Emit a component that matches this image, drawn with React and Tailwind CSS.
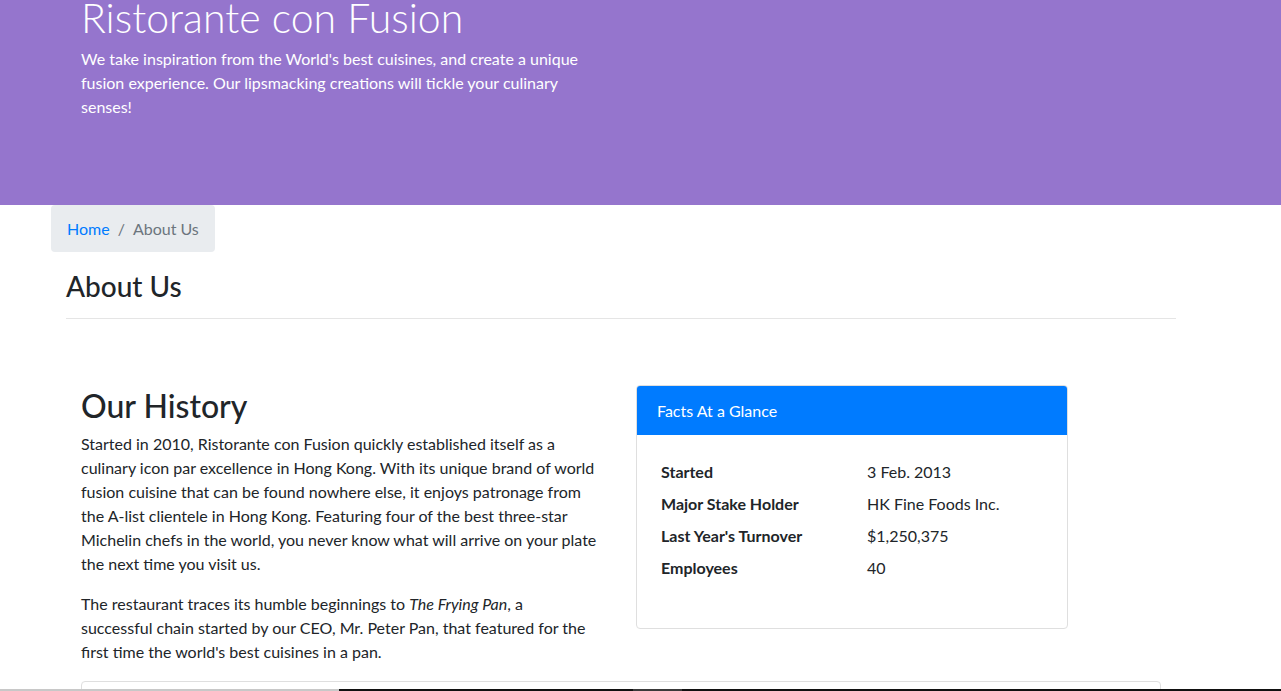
import React from 'react';

// About page: jumbotron, breadcrumb, history + facts card

const facts = [
  { label: 'Started', value: '3 Feb. 2013' },
  { label: 'Major Stake Holder', value: 'HK Fine Foods Inc.' },
  { label: "Last Year's Turnover", value: '$1,250,375' },
  { label: 'Employees', value: '40' },
];

export default function App() {
  return (
    <div className="min-h-screen bg-white text-[#212529] font-['Segoe_UI','Lato','Noto_Sans',sans-serif] text-[16px] leading-6">
      <header className="h-[205px] overflow-hidden bg-[#9575cd]">
        <div className="ml-[51px] w-[1140px] px-[30px]">
          <div className="w-[525px]">
            <h1 className="mt-[-7px] text-[41px] leading-[1.2] font-light text-white">Ristorante con Fusion</h1>
            <p className="mt-[5px] text-white">
              We take inspiration from the World's best cuisines, and create a unique fusion experience. Our lipsmacking creations will tickle your culinary senses!
            </p>
          </div>
        </div>
      </header>

      <div className="ml-[51px] w-[1140px]">
        <nav className="inline-flex h-[47px] items-center rounded bg-[#e9ecef] px-4">
          <a href="#" className="text-[#007bff]">Home</a>
          <span className="px-2 text-[#6c757d]">/</span>
          <span className="text-[#6c757d]">About Us</span>
        </nav>

        <div className="mt-[18px] px-[15px]">
          <h3 className="text-[28px] leading-[1.2] font-medium">About Us</h3>
          <hr className="mt-[14px] border-t border-[#e5e5e5]" />
        </div>

        <div className="mt-4 flex flex-wrap px-[30px] pt-[49px]">
          <div className="w-[525px]">
            <h2 className="mt-[3px] mb-[7px] text-[32px] leading-[1.2] font-medium">Our History</h2>
            <p className="mb-4">
              Started in 2010, Ristorante con Fusion quickly established itself as a culinary icon par excellence in Hong Kong. With its unique brand of world fusion cuisine that can be found nowhere else, it enjoys patronage from the A-list clientele in Hong Kong. Featuring four of the best three-star Michelin chefs in the world, you never know what will arrive on your plate the next time you visit us.
            </p>
            <p className="mb-4 w-[512px]">
              The restaurant traces its humble beginnings to <em>The Frying Pan</em>, a successful chain started by our CEO, Mr. Peter Pan, that featured for the first time the world's best cuisines in a pan.
            </p>
          </div>

          <div className="ml-[30px] mt-px w-[432px] self-start overflow-hidden rounded border border-[#dfdfdf]">
            <div className="h-[49px] bg-[#007bff] px-5 pt-[13px] text-white">Facts At a Glance</div>
            <div className="px-6 pt-[25px] pb-[40px]">
              <dl className="grid grid-cols-[206px_1fr]">
                {facts.map((f) => (
                  <React.Fragment key={f.label}>
                    <dt className="mb-2 font-bold">{f.label}</dt>
                    <dd className="mb-2">{f.value}</dd>
                  </React.Fragment>
                ))}
              </dl>
            </div>
          </div>

          <div className="mt-px h-[160px] w-[1080px] rounded border border-[#dfdfdf] bg-white" />
        </div>
      </div>

      <div className="fixed bottom-0 left-0 flex h-[2px] w-full">
        <div className="w-[339px] bg-[#c8c8c8]" />
        <div className="w-[294px] bg-[#111111]" />
        <div className="w-[49px] bg-[#3a3a3a]" />
        <div className="flex-1 bg-[#111111]" />
      </div>
    </div>
  );
}
